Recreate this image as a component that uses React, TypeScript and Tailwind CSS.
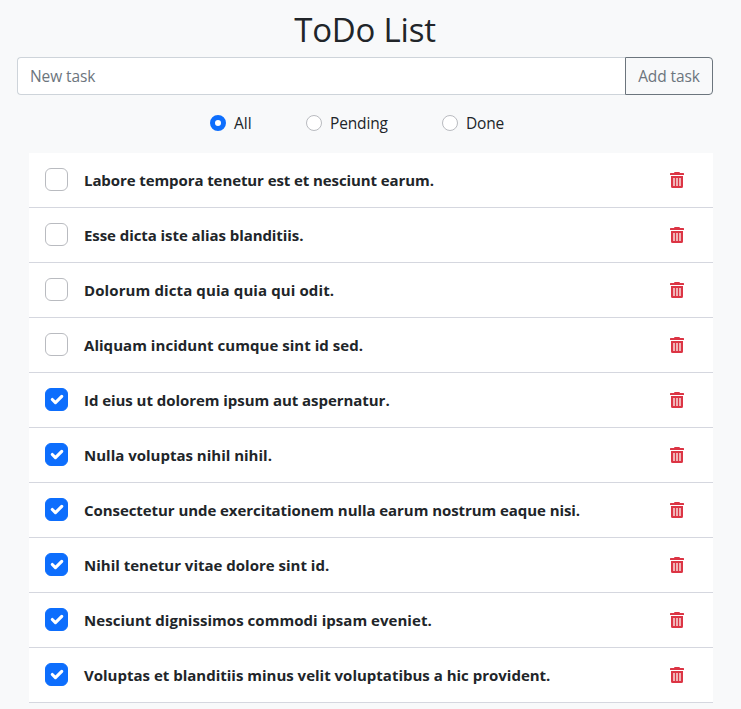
import React, { useState } from "react";

type Filter = "All" | "Pending" | "Done";
type Task = { id: number; title: string; done: boolean; tracking: string };

const initialTasks: Task[] = [
  { id: 1, title: "Labore tempora tenetur est et nesciunt earum.", done: false, tracking: "tracking-[-0.09px]" },
  { id: 2, title: "Esse dicta iste alias blanditiis.", done: false, tracking: "tracking-[-0.07px]" },
  { id: 3, title: "Dolorum dicta quia quia qui odit.", done: false, tracking: "tracking-[0.11px]" },
  { id: 4, title: "Aliquam incidunt cumque sint id sed.", done: false, tracking: "tracking-[0.04px]" },
  { id: 5, title: "Id eius ut dolorem ipsum aut aspernatur.", done: true, tracking: "tracking-[-0.05px]" },
  { id: 6, title: "Nulla voluptas nihil nihil.", done: true, tracking: "tracking-[0px]" },
  { id: 7, title: "Consectetur unde exercitationem nulla earum nostrum eaque nisi.", done: true, tracking: "tracking-[-0.065px]" },
  { id: 8, title: "Nihil tenetur vitae dolore sint id.", done: true, tracking: "tracking-[0px]" },
  { id: 9, title: "Nesciunt dignissimos commodi ipsam eveniet.", done: true, tracking: "tracking-[0.04px]" },
  { id: 10, title: "Voluptas et blanditiis minus velit voluptatibus a hic provident.", done: true, tracking: "tracking-[0px]" },
];

const filters: { name: Filter; width: string; tracking: string }[] = [
  { name: "All", width: "w-24", tracking: "tracking-[0px]" },
  { name: "Pending", width: "w-[136px]", tracking: "tracking-[-0.15px]" },
  { name: "Done", width: "w-16", tracking: "tracking-[-0.2px]" },
];

function TrashIcon() {
  return (
    <svg viewBox="0 0 14 16" className="block h-4 w-[14px]">
      <path
        fill="#dc3545"
        d="M4.6 0h4.8L10 1h3.4a.6.6 0 0 1 .6.6V3H0V1.600A.6.6 0 0 1 .6 1H4ZM1 4h12v10.500A1.500 1.500 0 0 1 11.500 16h-9A1.500 1.500 0 0 1 1 14.500Z"
      />
      <path fill="#f0b3b6" d="M3 6h2v8H3ZM6 6h2v8H6ZM9 6h2v8H9Z" />
    </svg>
  );
}

function Checkbox({ checked, onToggle }: { checked: boolean; onToggle: () => void }) {
  return (
    <button
      role="checkbox"
      aria-checked={checked}
      onClick={onToggle}
      className={`mb-0.5 size-[23px] shrink-0 rounded-[6px] border ${checked ? "border-[#0d6efd] bg-[#0d6efd]" : "border-[#b9bbc0] bg-white"}`}
    >
      {checked && (
        <svg viewBox="0 0 20 20" className="size-[21px]" fill="none" stroke="white" strokeWidth="3" strokeLinecap="round" strokeLinejoin="round">
          <path d="m6 10 3 3 6-6" />
        </svg>
      )}
    </button>
  );
}

export default function App() {
  const [tasks, setTasks] = useState(initialTasks);
  const [filter, setFilter] = useState<Filter>("All");
  const visible = tasks.filter((t) => filter === "All" || t.done === (filter === "Done"));

  return (
    <div className="h-[709px] w-[741px] overflow-hidden bg-[#f8f9fa] pr-7 pl-[17px] font-['Open_Sans','Noto_Sans',sans-serif] text-[#212529]">
      <h1 className="flex h-[57px] items-center justify-center pt-0.5 text-[33px] leading-[48px] font-medium tracking-[-0.2px]">
        <span>ToDo List</span>
      </h1>
      <div className="flex h-[38px]">
        <input
          placeholder="New task"
          className="w-[608px] rounded-l-[4px] border border-r-0 border-[#ced4da] bg-white px-3 pt-0.5 text-[15.5px] tracking-[-0.1px] outline-none placeholder:text-[#6c757d]"
        />
        <button className="w-[88px] rounded-r-[4px] border border-[#6c757d] pt-0.5 text-[15.5px] tracking-[-0.1px] text-[#6c757d]">Add task</button>
      </div>
      <div className="flex h-[58px] pl-[193px]">
        {filters.map(({ name, width, tracking }) => (
          <button key={name} onClick={() => setFilter(name)} className={`flex h-14 shrink-0 items-center gap-2 text-[15.5px] ${width} ${tracking}`}>
            <span className={`size-4 shrink-0 rounded-full bg-white ${filter === name ? "border-5 border-[#0d6efd]" : "border border-[#b9bbc0]"}`} />
            <span className="pt-0.5">{name}</span>
          </button>
        ))}
      </div>
      <ul className="ml-3 bg-white">
        {visible.map((task) => (
          <li key={task.id} className="flex h-[55px] items-center border-b border-[#d5d7df] pr-[29px] pl-4">
            <Checkbox
              checked={task.done}
              onToggle={() => setTasks(tasks.map((t) => (t.id === task.id ? { ...t, done: !t.done } : t)))}
            />
            <span className={`ml-4 text-[15px] font-bold whitespace-nowrap ${task.tracking}`}>{task.title}</span>
            <button aria-label="Delete task" className="ml-auto" onClick={() => setTasks(tasks.filter((t) => t.id !== task.id))}>
              <TrashIcon />
            </button>
          </li>
        ))}
      </ul>
    </div>
  );
}
